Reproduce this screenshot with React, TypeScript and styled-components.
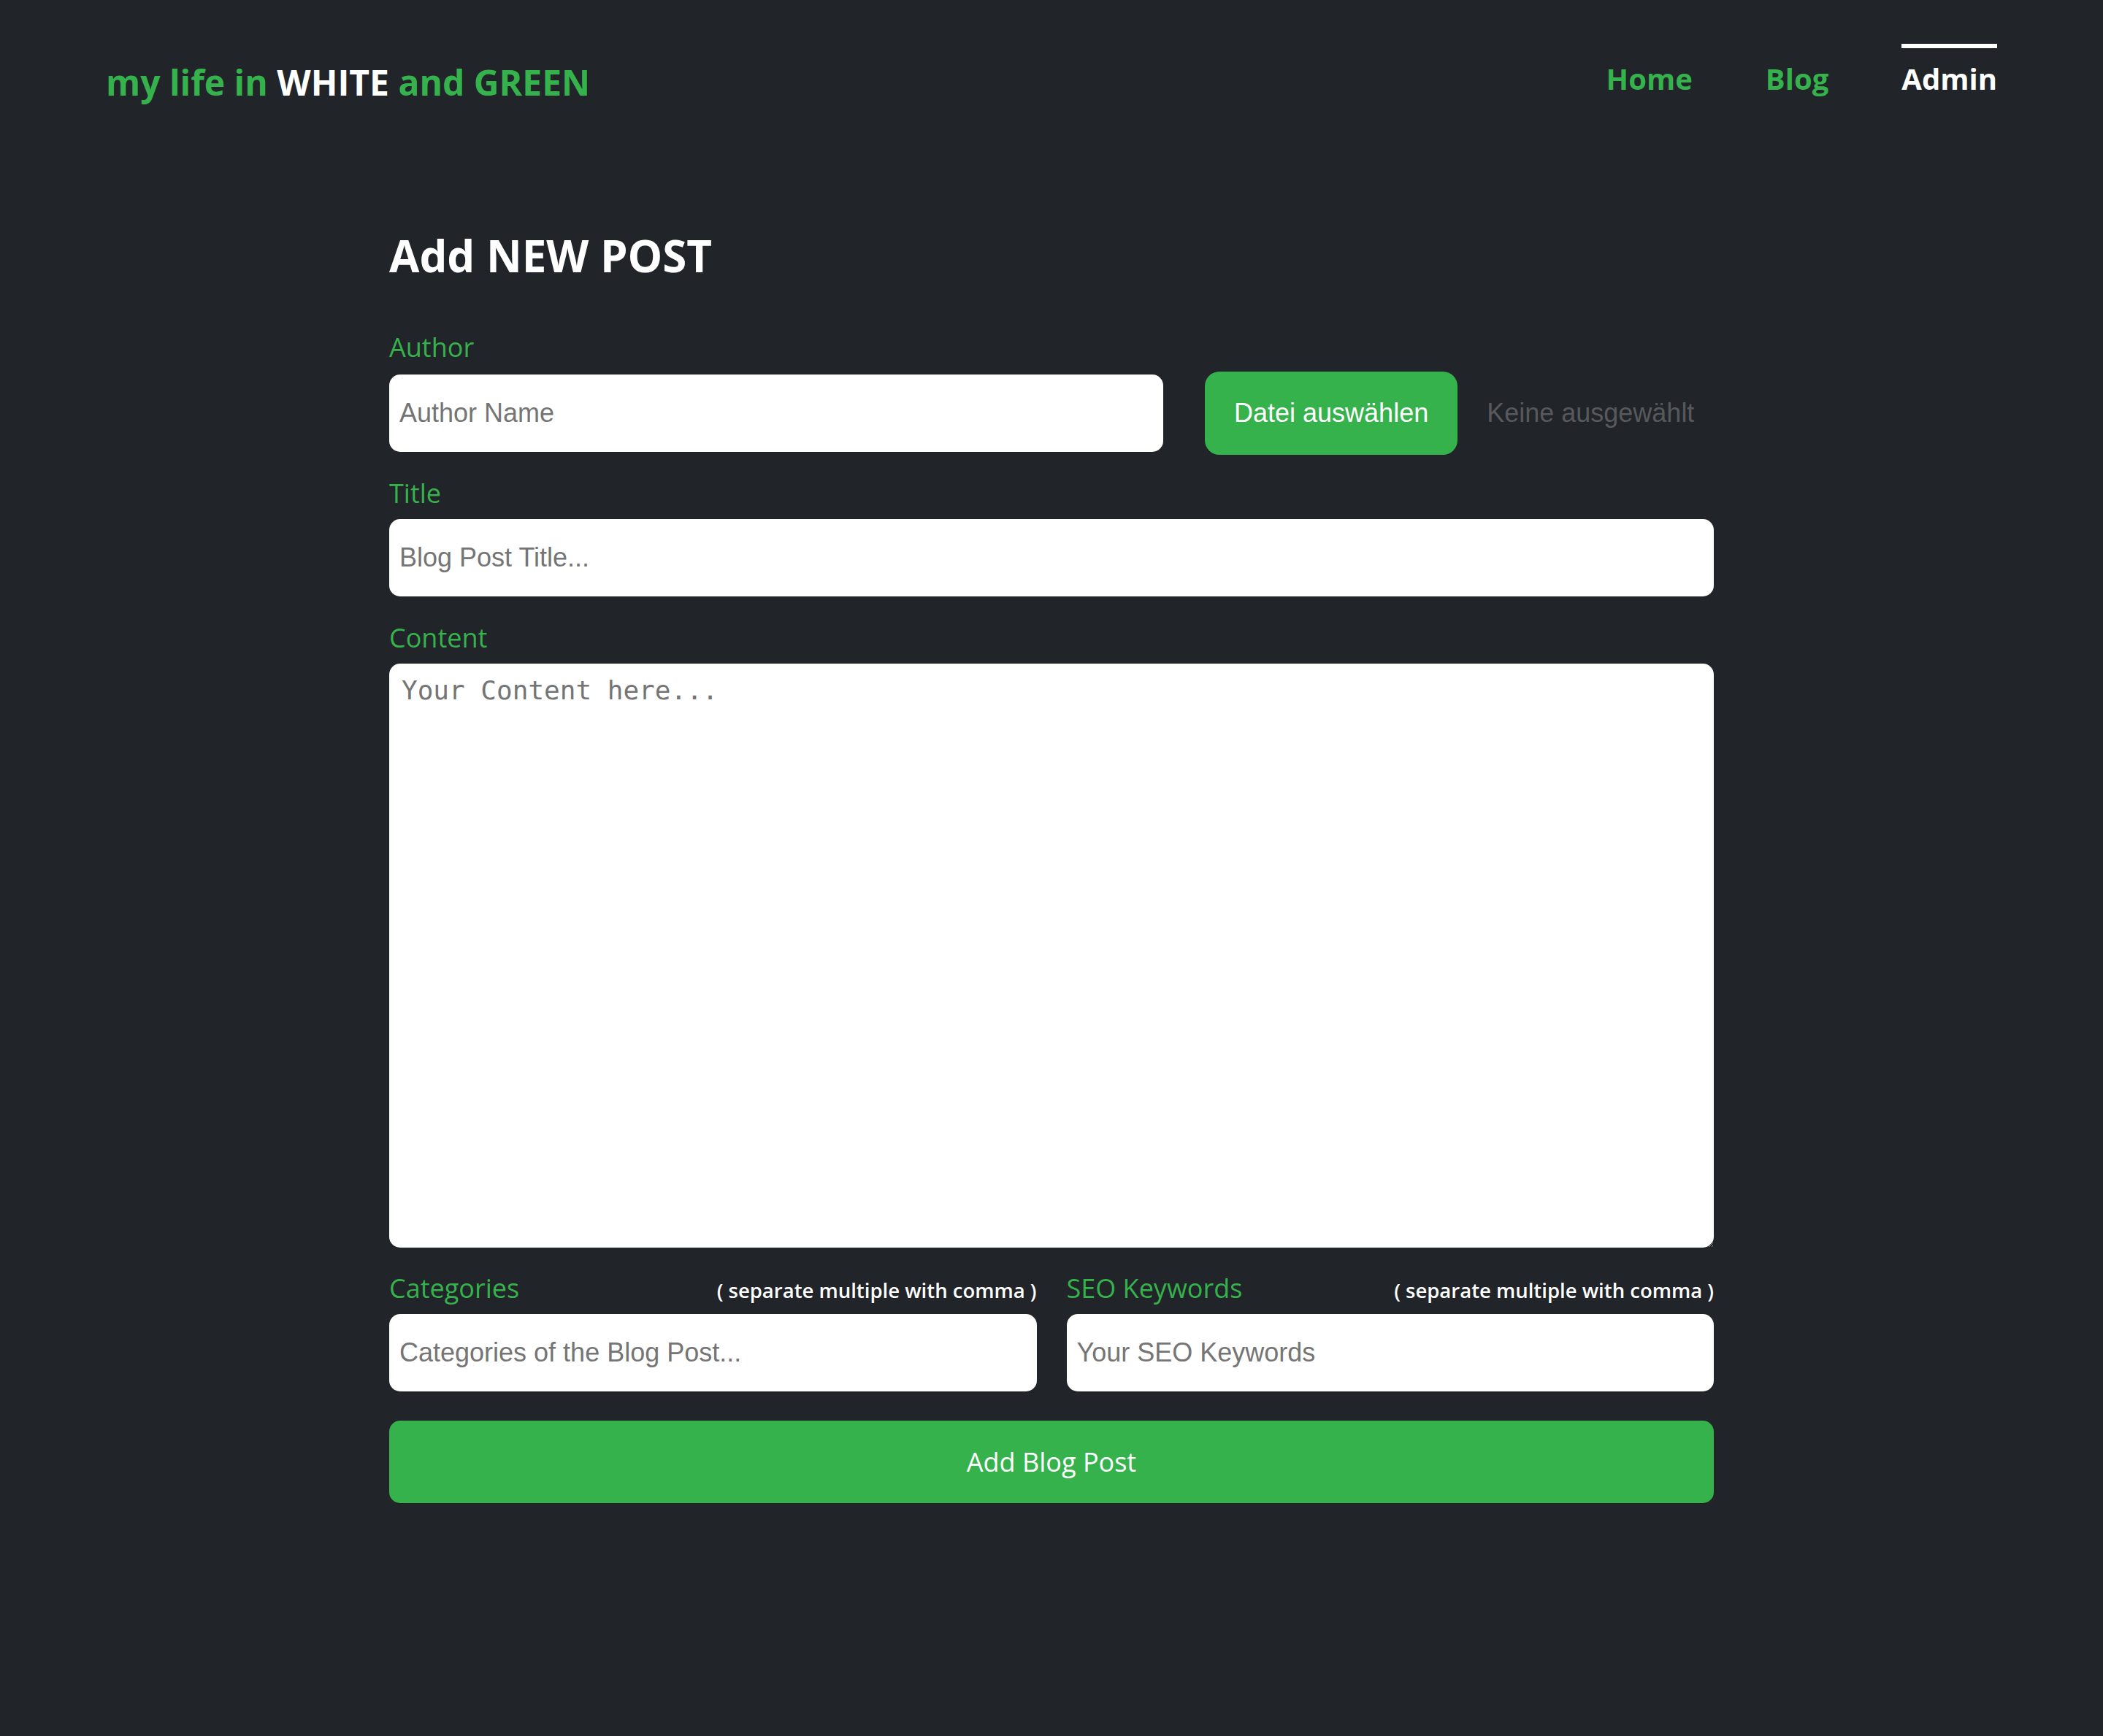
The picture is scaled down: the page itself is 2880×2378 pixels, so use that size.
import styled, { createGlobalStyle } from "styled-components";

const GREEN = "#36b24d";
const BG = "#212429";

const GlobalStyle = createGlobalStyle`
  body {
    margin: 0;
    background: ${BG};
    font-family: "Open Sans", sans-serif;
  }
`;

function App() {
  return (
    <>
      <GlobalStyle />
      <Header>
        <Logo>
          my life in <White>WHITE</White> and GREEN
        </Logo>
        <Nav>
          <NavItem>Home</NavItem>
          <NavItem>Blog</NavItem>
          <NavItem $active>Admin</NavItem>
        </Nav>
      </Header>

      <Main>
        <Heading>Add NEW POST</Heading>

        <Label>Author</Label>
        <AuthorRow>
          <AuthorInput type="text" placeholder="Author Name" />
          <FileButton type="button">Datei auswählen</FileButton>
          <FileName>Keine ausgewählt</FileName>
        </AuthorRow>

        <Label>Title</Label>
        <TextInput type="text" placeholder="Blog Post Title..." />

        <Label>Content</Label>
        <ContentArea placeholder="Your Content here..." />

        <SplitRow>
          <div>
            <LabelRow>
              <Label>Categories</Label>
              <Hint>( separate multiple with comma )</Hint>
            </LabelRow>
            <TextInput type="text" placeholder="Categories of the Blog Post..." />
          </div>
          <div>
            <LabelRow>
              <Label>SEO Keywords</Label>
              <Hint>( separate multiple with comma )</Hint>
            </LabelRow>
            <TextInput type="text" placeholder="Your SEO Keywords" />
          </div>
        </SplitRow>

        <SubmitButton type="button">Add Blog Post</SubmitButton>
      </Main>
    </>
  );
}

const Header = styled.header`
  display: flex;
  justify-content: space-between;
  align-items: flex-start;
  padding: 60px 145px 0;
`;

const Logo = styled.div`
  margin-top: 20px;
  font-size: 48px;
  font-weight: 700;
  color: ${GREEN};
  white-space: nowrap;
`;

const White = styled.span`
  color: #ffffff;
`;

const Nav = styled.nav`
  display: flex;
  gap: 100px;
`;

const NavItem = styled.a<{ $active?: boolean }>`
  padding-top: 14px;
  border-top: 6px solid ${(p) => (p.$active ? "#ffffff" : "transparent")};
  font-size: 40px;
  font-weight: 700;
  color: ${(p) => (p.$active ? "#ffffff" : GREEN)};
  cursor: pointer;
`;

const Main = styled.main`
  width: 1814px;
  margin: 164px auto 0;
  padding-bottom: 200px;
`;

const Heading = styled.h1`
  margin: 0 0 60px;
  font-size: 60px;
  font-weight: 700;
  color: #ffffff;
`;

const Label = styled.label`
  display: block;
  margin-bottom: 11px;
  font-size: 36px;
  font-weight: 400;
  color: ${GREEN};
`;

const LabelRow = styled.div`
  display: flex;
  justify-content: space-between;
  align-items: baseline;
`;

const Hint = styled.span`
  font-size: 27.5px;
  font-weight: 600;
  color: #ffffff;
`;

const TextInput = styled.input`
  display: block;
  box-sizing: border-box;
  width: 100%;
  height: 106px;
  margin: 0 0 32px;
  padding: 0 14px;
  border: none;
  border-radius: 15px;
  background: #ffffff;
  font-family: "Liberation Sans", Arial, sans-serif;
  font-size: 36px;
  color: #222;
  outline: none;

  &::placeholder {
    color: #757575;
  }
`;

const AuthorRow = styled.div`
  display: flex;
  align-items: center;
  margin: -2px 0 28px;
`;

const AuthorInput = styled(TextInput)`
  width: 1060px;
  margin: 0 57px 0 0;
`;

const FileButton = styled.button`
  height: 114px;
  padding: 0 40px;
  border: none;
  border-radius: 20px;
  background: ${GREEN};
  color: #ffffff;
  font-family: "Liberation Sans", Arial, sans-serif;
  font-size: 36px;
  cursor: pointer;
`;

const FileName = styled.span`
  margin-left: 40px;
  font-family: "Liberation Sans", Arial, sans-serif;
  font-size: 36px;
  color: #57595c;
`;

const ContentArea = styled.textarea`
  display: block;
  box-sizing: border-box;
  width: 100%;
  height: 800px;
  margin: 0 0 31px;
  padding: 16px 17px;
  border: none;
  border-radius: 15px;
  background: #ffffff;
  font-family: "DejaVu Sans Mono", monospace;
  font-size: 36px;
  outline: none;

  &::placeholder {
    color: #757575;
  }
`;

const SplitRow = styled.div`
  display: grid;
  grid-template-columns: 1fr 1fr;
  column-gap: 41px;

  ${TextInput} {
    margin-bottom: 40px;
  }
`;

const SubmitButton = styled.button`
  display: block;
  width: 100%;
  height: 113px;
  border: none;
  border-radius: 15px;
  background: ${GREEN};
  color: #ffffff;
  font-family: "Open Sans", sans-serif;
  font-size: 36px;
  font-weight: 500;
  cursor: pointer;
`;

export default App;
